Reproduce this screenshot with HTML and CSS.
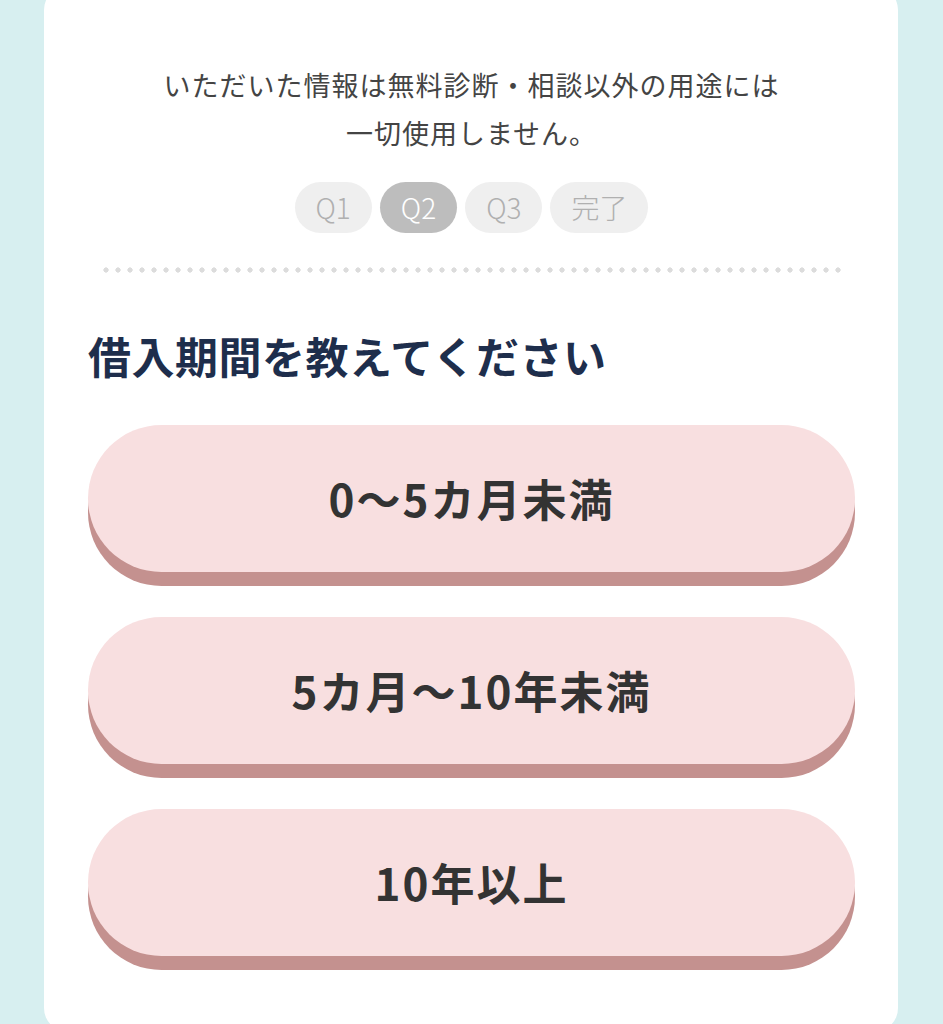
FILE: index.html
```html
<!DOCTYPE html>
<html lang="ja">
<head>
    <meta charset="UTF-8">
    <meta name="viewport" content="width=device-width, initial-scale=1.0">
    <title>借入期間</title>
    <link rel="stylesheet" href="styles.css">
</head>
<body>
    <div class="card">
        <p class="notice">いただいた情報は無料診断・相談以外の用途には<br>一切使用しません。</p>

        <div class="steps">
            <span class="step">Q1</span>
            <span class="step active">Q2</span>
            <span class="step">Q3</span>
            <span class="step">完了</span>
        </div>

        <div class="dots"></div>

        <h2 class="question">借入期間を教えてください</h2>

        <div class="choices">
            <button class="choice">0〜5カ月未満</button>
            <button class="choice">5カ月〜10年未満</button>
            <button class="choice">10年以上</button>
        </div>
    </div>
</body>
</html>
```

FILE: styles.css
```css
body {
    margin: 0;
    padding: 0 45px 0 44px;
    background: #d7eff0;
    font-family: "Noto Sans CJK JP", "Noto Sans", sans-serif;
    overflow: hidden;
}

.card {
    background: #fff;
    border-radius: 24px;
    margin-top: -14px;
    padding: 75px 43px 76px 44px;
}

.notice {
    margin: 0;
    text-align: center;
    font-size: 27px;
    line-height: 48px;
    letter-spacing: 1px;
    color: #444;
    font-weight: 400;
}

.steps {
    margin-top: 25px;
    display: flex;
    justify-content: center;
    gap: 8px;
}

.step {
    height: 51px;
    line-height: 51px;
    padding: 0 21px;
    border-radius: 26px;
    background: #efefef;
    color: #b0b0b0;
    font-size: 28px;
    font-weight: 300;
}

.step.active {
    background: #bdbdbd;
    color: #fff;
}

.dots {
    margin: 34px 10px 0 12px;
    height: 6px;
    background-image: radial-gradient(circle, #dcdcdc 2.4px, transparent 2.8px);
    background-size: 12px 6px;
    background-repeat: repeat-x;
}

.question {
    margin: 57px 0 0;
    font-size: 43px;
    line-height: 1.2;
    letter-spacing: 0.5px;
    color: #1e2e4c;
    font-weight: 700;
}

.choices {
    margin-top: 43px;
    display: flex;
    flex-direction: column;
    gap: 45px;
}

.choice {
    height: 147px;
    border: none;
    border-radius: 74px;
    background: #f8dfe0;
    box-shadow: 0 14px 0 #c4918f;
    font-family: inherit;
    font-size: 44px;
    font-weight: 700;
    letter-spacing: 2px;
    color: #333;
    cursor: pointer;
}
```
